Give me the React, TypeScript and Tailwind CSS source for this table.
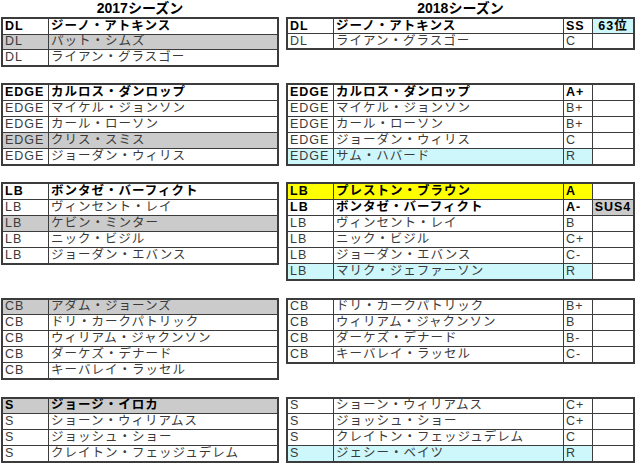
import React from "react"

type Row = {
  pos: string
  name: string
  grade?: string
  note?: string
  bold?: boolean
  bg?: "gray" | "cyan" | "yellow"
  noteBg?: "gray" | "cyan"
}

const bgCls = {
  gray: "bg-[#cbcbcb]",
  cyan: "bg-[#cdf7fb]",
  yellow: "bg-[#ffff00]",
}

const left: { gap: number; rows: Row[] }[] = [
  {
    gap: 0,
    rows: [
      { pos: "DL", name: "ジーノ・アトキンス", bold: true },
      { pos: "DL", name: "パット・シムズ", bg: "gray" },
      { pos: "DL", name: "ライアン・グラスゴー" },
    ],
  },
  {
    gap: 1,
    rows: [
      { pos: "EDGE", name: "カルロス・ダンロップ", bold: true },
      { pos: "EDGE", name: "マイケル・ジョンソン" },
      { pos: "EDGE", name: "カール・ローソン" },
      { pos: "EDGE", name: "クリス・スミス", bg: "gray" },
      { pos: "EDGE", name: "ジョーダン・ウィリス" },
    ],
  },
  {
    gap: 1,
    rows: [
      { pos: "LB", name: "ボンタゼ・バーフィクト", bold: true },
      { pos: "LB", name: "ヴィンセント・レイ" },
      { pos: "LB", name: "ケビン・ミンター", bg: "gray" },
      { pos: "LB", name: "ニック・ビジル" },
      { pos: "LB", name: "ジョーダン・エバンス" },
    ],
  },
  {
    gap: 2,
    rows: [
      { pos: "CB", name: "アダム・ジョーンズ", bg: "gray" },
      { pos: "CB", name: "ドリ・カークパトリック" },
      { pos: "CB", name: "ウィリアム・ジャクンソン" },
      { pos: "CB", name: "ダーケズ・デナード" },
      { pos: "CB", name: "キーバレイ・ラッセル" },
    ],
  },
  {
    gap: 1,
    rows: [
      { pos: "S", name: "ジョージ・イロカ", bold: true, bg: "gray" },
      { pos: "S", name: "ショーン・ウィリアムス" },
      { pos: "S", name: "ジョッシュ・ショー" },
      { pos: "S", name: "クレイトン・フェッジュデレム" },
    ],
  },
]

const right: { gap: number; rows: Row[] }[] = [
  {
    gap: 0,
    rows: [
      { pos: "DL", name: "ジーノ・アトキンス", grade: "SS", note: "63位", noteBg: "cyan", bold: true },
      { pos: "DL", name: "ライアン・グラスゴー", grade: "C" },
    ],
  },
  {
    gap: 2,
    rows: [
      { pos: "EDGE", name: "カルロス・ダンロップ", grade: "A+", bold: true },
      { pos: "EDGE", name: "マイケル・ジョンソン", grade: "B+" },
      { pos: "EDGE", name: "カール・ローソン", grade: "B+" },
      { pos: "EDGE", name: "ジョーダン・ウィリス", grade: "C" },
      { pos: "EDGE", name: "サム・ハバード", grade: "R", bg: "cyan" },
    ],
  },
  {
    gap: 1,
    rows: [
      { pos: "LB", name: "プレストン・ブラウン", grade: "A", bold: true, bg: "yellow" },
      { pos: "LB", name: "ボンタゼ・バーフィクト", grade: "A-", note: "SUS4", noteBg: "gray", bold: true },
      { pos: "LB", name: "ヴィンセント・レイ", grade: "B" },
      { pos: "LB", name: "ニック・ビジル", grade: "C+" },
      { pos: "LB", name: "ジョーダン・エバンス", grade: "C-" },
      { pos: "LB", name: "マリク・ジェファーソン", grade: "R", bg: "cyan" },
    ],
  },
  {
    gap: 1,
    rows: [
      { pos: "CB", name: "ドリ・カークパトリック", grade: "B+" },
      { pos: "CB", name: "ウィリアム・ジャクンソン", grade: "B" },
      { pos: "CB", name: "ダーケズ・デナード", grade: "B-" },
      { pos: "CB", name: "キーバレイ・ラッセル", grade: "C-" },
    ],
  },
  {
    gap: 2,
    rows: [
      { pos: "S", name: "ショーン・ウィリアムス", grade: "C+" },
      { pos: "S", name: "ジョッシュ・ショー", grade: "C+" },
      { pos: "S", name: "クレイトン・フェッジュデレム", grade: "C" },
      { pos: "S", name: "ジェシー・ベイツ", grade: "R", bg: "cyan" },
    ],
  },
]

const gapCls = ["", "mt-[16.5px]", "mt-[33px]"]
const heightCls: Record<number, string> = {
  2: "h-[33px]",
  3: "h-[49.5px]",
  4: "h-[66px]",
  5: "h-[82.5px]",
  6: "h-[99px]",
}

function Table({ rows, gap, wide }: { rows: Row[]; gap: number; wide?: boolean }) {
  return (
    <div
      className={`${gapCls[gap]} ${heightCls[rows.length]} flex flex-col border-2 border-[#3c3c3c] bg-white`}
    >
      {rows.map((r, i) => {
        const txt = r.bold ? "font-bold text-black" : "text-[#3a3a3a]"
        const bg = r.bg ? bgCls[r.bg] : ""
        return (
          <div key={i} className={`flex min-h-0 flex-1 ${i > 0 ? "border-t border-[#3c3c3c]" : ""}`}>
            <div className={`flex w-[46px] shrink-0 items-center border-r border-[#3c3c3c] px-[2px] ${bg} ${txt}`}>
              {r.pos}
            </div>
            <div
              className={`flex items-center px-[2px] ${bg} ${txt} ${wide ? "w-[230px] shrink-0 border-r border-[#3c3c3c]" : "flex-1"}`}
            >
              {r.name}
            </div>
            {wide && (
              <>
                <div className={`flex w-[29px] shrink-0 items-center border-r border-[#3c3c3c] px-[2px] ${bg} ${txt}`}>
                  {r.grade}
                </div>
                <div
                  className={`flex flex-1 items-center justify-center ${r.noteBg ? bgCls[r.noteBg] : ""} ${txt}`}
                >
                  {r.note}
                </div>
              </>
            )}
          </div>
        )
      })}
    </div>
  )
}

export default function App() {
  return (
    <div
      className="flex h-[472px] w-[640px] gap-[7px] bg-white pl-[1px] text-[12.5px] leading-[13px] tracking-[1px]"
      style={{ fontFamily: '"Liberation Sans", "Noto Sans CJK JP", sans-serif' }}
    >
      <div className="flex w-[278px] flex-col">
        <div className="flex h-[17px] items-center justify-center text-[14px] font-bold tracking-normal text-black">
          2017シーズン
        </div>
        {left.map((t, i) => (
          <Table key={i} rows={t.rows} gap={t.gap} />
        ))}
      </div>
      <div className="flex w-[349px] flex-col">
        <div className="flex h-[17px] items-center justify-center text-[14px] font-bold tracking-normal text-black">
          2018シーズン
        </div>
        {right.map((t, i) => (
          <Table key={i} rows={t.rows} gap={t.gap} wide />
        ))}
      </div>
    </div>
  )
}
